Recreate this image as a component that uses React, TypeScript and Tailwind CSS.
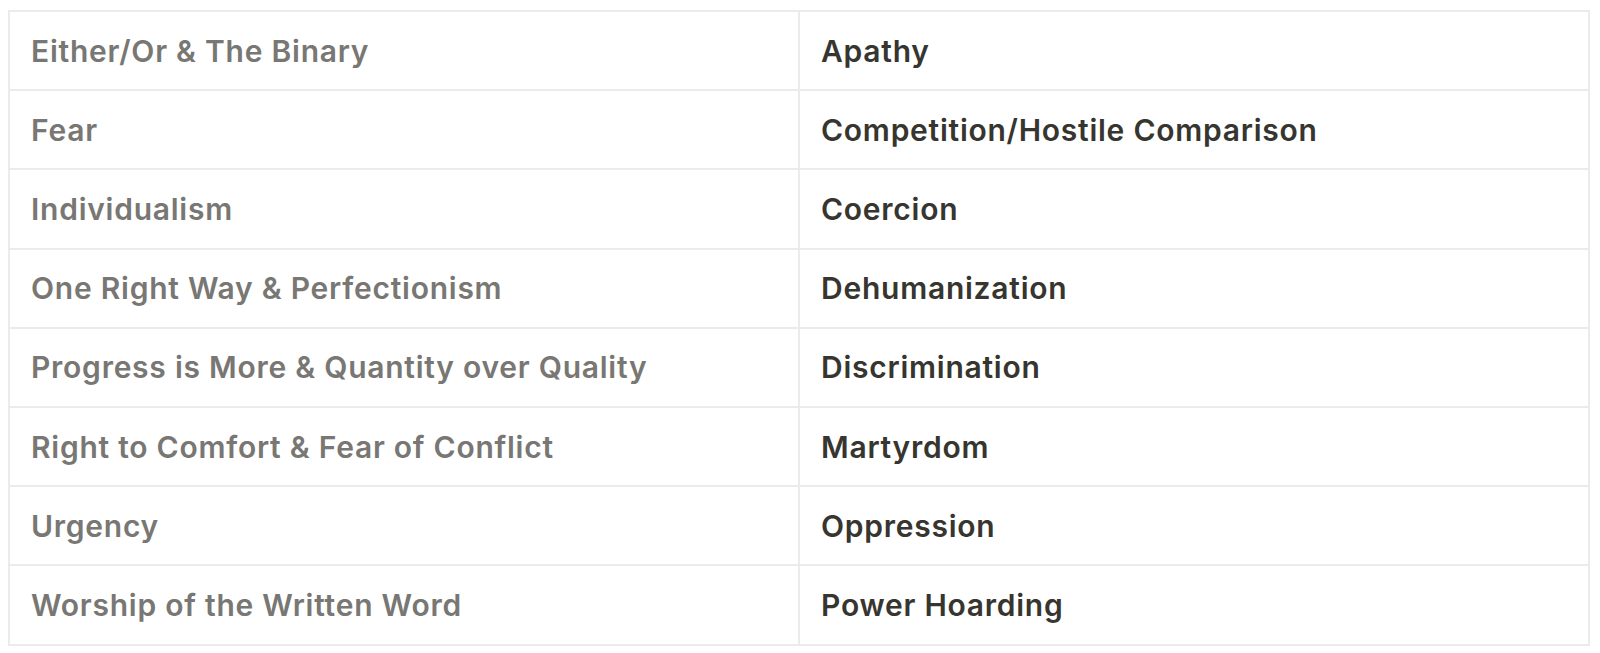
const rows: [string, string][] = [
  ["Either/Or & The Binary", "Apathy"],
  ["Fear", "Competition/Hostile Comparison"],
  ["Individualism", "Coercion"],
  ["One Right Way & Perfectionism", "Dehumanization"],
  ["Progress is More & Quantity over Quality", "Discrimination"],
  ["Right to Comfort & Fear of Conflict", "Martyrdom"],
  ["Urgency", "Oppression"],
  ["Worship of the Written Word", "Power Hoarding"],
];

export default function App() {
  return (
    <div className="min-h-screen bg-white pt-[10px] pl-[8px] pr-[10px] font-['Inter',sans-serif]">
      <table className="w-[1582px] border-collapse table-fixed">
        <tbody>
          {rows.map(([left, right]) => (
            <tr key={left} className="h-[79.2px]">
              <td className="w-[790px] border-2 border-[#ebebea] pl-[21px] pt-[1px] text-[30px] font-semibold tracking-[0.75px] text-[#787774]">
                {left}
              </td>
              <td className="border-2 border-[#ebebea] pl-[21px] pt-[1px] text-[30px] font-semibold tracking-[0.75px] text-[#37352f]">
                {right}
              </td>
            </tr>
          ))}
        </tbody>
      </table>
    </div>
  );
}
